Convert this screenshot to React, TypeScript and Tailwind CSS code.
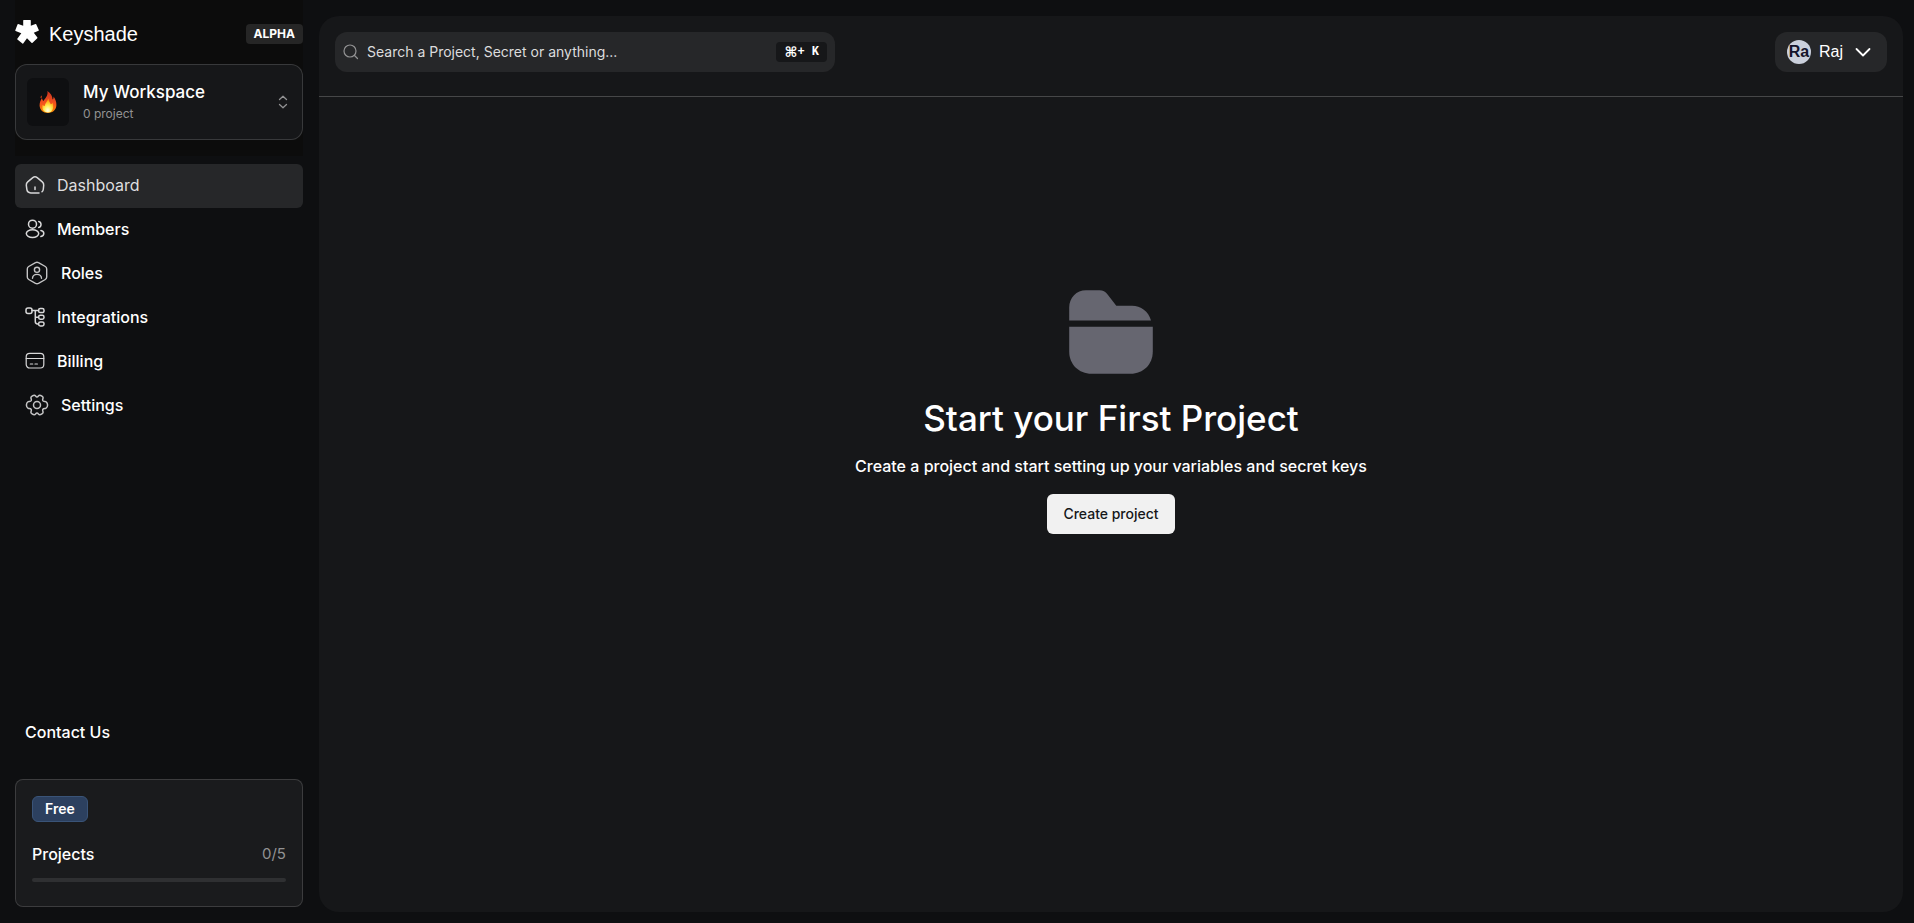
import type { ReactNode } from 'react';

type NavItem = { label: string; icon: ReactNode; active?: boolean; wide?: boolean };

const stroke = {
  fill: 'none',
  stroke: 'currentColor',
  strokeLinecap: 'round' as const,
  strokeLinejoin: 'round' as const,
};

function LogoIcon() {
  return (
    <svg viewBox="0 0 24 24" className="size-6" fill="white" aria-hidden="true">
      <path d="M8.200 .5Q8.200 0 8.700 0h6.600q.5 0 .5.500V5.800l4.700-1.800q.5-.2.700.3l2.600 5.700q.2.600-.3.800l-4.700 1.900 3.600 4.800q.3.400-.1.700l-5 4.700q-.4.400-.8-.1L12 18.300l-3.800 5.200q-.3.500-.8.100l-5-4.200q-.4-.3-.1-.7l4-5.400-5.700-2.200q-.5-.2-.3-.8l2.200-5.900q.2-.6.700-.4l5 1.800z" />
    </svg>
  );
}

function FlameIcon() {
  return (
    <svg viewBox="0 0 18 22" className="h-[22px] w-[18px]" aria-hidden="true">
      <defs>
        <linearGradient id="flame" x1="0" y1="0" x2="0" y2="1">
          <stop offset="0" stopColor="#c9341f" />
          <stop offset=".55" stopColor="#f4511e" />
          <stop offset="1" stopColor="#fb8c00" />
        </linearGradient>
        <radialGradient id="core" cx=".5" cy=".85" r=".75">
          <stop offset="0" stopColor="#fffde7" />
          <stop offset=".45" stopColor="#ffee58" />
          <stop offset="1" stopColor="#ff9800" />
        </radialGradient>
      </defs>
      <path fill="url(#flame)" d="M8.300 0c3.500 2 5.200 5 5.200 8.500.9-.6 1.200-1.700 1-3 2 2.700 3 5.600 2.900 8.600C17.300 18.800 13.900 22 9 22S.7 18.900.6 14.500c-.1-3 1.300-5.400 2.300-7.400.4 1 .7 2.400 1.600 3C5.900 7.500 9.600 4.500 8.300 0z" />
      <path fill="url(#core)" d="M9.300 7.500c.4 2.800 1.700 4 2.500 5.700.8-.2 1.400-.9 1.700-1.800 1.600 4.700.6 9.900-4.500 10.200-5 0-6.400-4-5.300-7.800.6.9 1.300 1.300 2 1.200.3-3 2.900-4.700 3.600-7.500z" />
      <path fill="#d84315" d="M1.500 6.500c.1-1 .7-1.600 1.300-2-.1.900.1 1.700-.2 2.300-.3.500-1.100.3-1.100-.3z" />
    </svg>
  );
}

function HomeIcon() {
  return (
    <svg viewBox="0 0 20 20" className="size-5" {...stroke} strokeWidth="1.500" aria-hidden="true">
      <path d="M17 16.800c.8-.7 1.200-1.500 1.300-2.600l.4-4c.1-1.400-.3-2.500-1.400-3.400l-5.100-4.100c-1.400-1.100-3-1.100-4.400 0L2.700 6.800C1.600 7.700 1.200 8.800 1.300 10.200l.5 4c.3 2.600 1.500 3.700 4 3.700h8.200M10 14.500v-2.500" />
    </svg>
  );
}

function MembersIcon() {
  return (
    <svg viewBox="0 0 20 20" className="size-5" {...stroke} strokeWidth="1.500" aria-hidden="true">
      <circle cx="7.500" cy="5.200" r="4" />
      <ellipse cx="7.500" cy="14.600" rx="6.200" ry="3.900" />
      <path d="M13.700 2.400a3.100 3.100 0 0 1 0 6M15.900 11.600c1.800.4 2.900 1.300 2.900 2.800 0 1.600-1.200 2.700-2.900 3.100" />
    </svg>
  );
}

function RolesIcon() {
  return (
    <svg viewBox="0 0 24 24" className="size-6" {...stroke} strokeWidth="1.400" aria-hidden="true">
      <path d="M10.500 1.700q1.500-.9 3 0l6.800 3.800q1.400.8 1.400 2.400v8.200q0 1.600-1.400 2.400l-6.800 3.900q-1.500.8-3 0l-6.800-3.900q-1.400-.8-1.400-2.400V7.900q0-1.600 1.400-2.400z" />
      <circle cx="12" cy="8.800" r="2.600" />
      <path d="M7.500 17.300c.2-2.500 2-3.900 4.500-3.900s4.300 1.400 4.500 3.900" />
    </svg>
  );
}

function IntegrationsIcon() {
  return (
    <svg viewBox="0 0 20 20" className="size-5" {...stroke} strokeWidth="1.500" aria-hidden="true">
      <rect x="1" y="1" width="6" height="5.400" rx="2" />
      <rect x="13.600" y="1.600" width="5.400" height="4" rx="1.700" />
      <rect x="13.600" y="8.200" width="5.400" height="4" rx="1.700" />
      <rect x="13.600" y="14.900" width="5.400" height="4" rx="1.700" />
      <path d="M7 3.600h6.500M10.300 3.600V14.500q0 2.400 2.300 2.400h1M10.300 10.200h3.300" />
    </svg>
  );
}

function BillingIcon() {
  return (
    <svg viewBox="0 0 20 20" className="size-5" {...stroke} strokeWidth="1.200" aria-hidden="true">
      <rect x="1.200" y="2.300" width="17.600" height="14.700" rx="3.500" />
      <path d="M1.200 7.500h17.600M5.300 13h2.400M10 13h2.400" />
    </svg>
  );
}

function SettingsIcon() {
  return (
    <svg viewBox="0 0 24 24" className="size-6" {...stroke} strokeWidth="1.500" aria-hidden="true">
      <circle cx="12" cy="12" r="3.500" />
      <path d="M9.400 2.300c1.100 0 1.300 1.700 2.600 1.700s1.500-1.700 2.600-1.700c1.500 0 3.500 1.200 3.500 2.500 0 1-.9 1.600-.3 2.800.7 1.200 2.200.5 3 1 1 .6 1.800 2.200 1.800 3.400s-.8 2.800-1.800 3.400c-.8.5-2.300-.2-3 1-.6 1.200.3 1.800.3 2.800 0 1.300-2 2.500-3.500 2.500-1.100 0-1.300-1.700-2.600-1.700s-1.500 1.700-2.600 1.700c-1.500 0-3.500-1.200-3.500-2.500 0-1 .9-1.600.3-2.800-.7-1.200-2.200-.5-3-1-1-.6-1.800-2.200-1.800-3.400s.8-2.800 1.800-3.400c.8-.5 2.300.2 3-1 .6-1.200-.3-1.800-.3-2.800 0-1.300 2-2.500 3.500-2.500z" />
    </svg>
  );
}

function FolderIcon() {
  return (
    <svg viewBox="0 0 84 84" className="size-[84px]" fill="#666670" aria-hidden="true">
      <path d="M.2 30.500V17.500C.2 7.500 7.500.2 17 .2h13.500c3.500 0 5.900 1.300 7.900 4l8.900 11.600H63c8.700 0 16.600 5.700 19 14.700z" />
      <path d="M.2 36.800H83.800V61.500c0 12.800-9.500 22.300-22.300 22.300H22.500C9.700 83.800.2 74.300.2 61.500z" />
    </svg>
  );
}

const navItems: NavItem[] = [
  { label: 'Dashboard', icon: <HomeIcon />, active: true },
  { label: 'Members', icon: <MembersIcon /> },
  { label: 'Roles', icon: <RolesIcon />, wide: true },
  { label: 'Integrations', icon: <IntegrationsIcon /> },
  { label: 'Billing', icon: <BillingIcon /> },
  { label: 'Settings', icon: <SettingsIcon />, wide: true },
];

function Sidebar() {
  return (
    <aside className="flex w-[319px] shrink-0 flex-col pr-4 pb-4 pl-[15px]">
      <div className="bg-[#0c0c0c] pt-5 pb-4">
        <div className="flex items-center justify-between">
          <div className="flex items-start gap-2.5 font-['Liberation_Sans',sans-serif] text-xl">
            <LogoIcon />
            Keyshade
          </div>
          <span className="rounded bg-[#262626] px-2 text-xs leading-5 font-bold">ALPHA</span>
        </div>
        <button type="button" className="mt-4 flex w-full items-center rounded-xl border border-white/15 bg-[#161719] px-[11px] py-[13px] text-left">
          <span className="flex h-12 w-[42px] items-center justify-center rounded-md bg-[#0e0f11]">
            <FlameIcon />
          </span>
          <span className="ml-3.5 flex grow flex-col">
            <span className="text-[17px] leading-6 font-medium">My Workspace</span>
            <span className="text-xs leading-5 text-[#929293]">0 project</span>
          </span>
          <svg viewBox="0 0 16 16" className="size-4 text-[#929293]" {...stroke} strokeWidth="1.300" aria-hidden="true">
            <path d="M4.500 5.500 8 2.300l3.500 3.200M4.500 10.500 8 13.700l3.500-3.200" />
          </svg>
        </button>
      </div>

      <nav className="mt-2 flex flex-col">
        {navItems.map((item) => (
          <a
            key={item.label}
            href="#"
            className={
              item.active
                ? 'flex h-11 items-center gap-3 rounded-md bg-[#262729] px-2.5 pb-0.5 text-[#dededf]'
                : 'flex h-11 items-center gap-3 rounded-md px-2.5 pb-0.5 font-medium'
            }
          >
            <span className={item.wide ? 'text-[#c4c4c5]' : 'text-[#d8d8d9]'}>{item.icon}</span>
            {item.label}
          </a>
        ))}
      </nav>

      <a href="#" className="mt-auto px-2.5 font-medium">
        Contact Us
      </a>

      <section className="mt-[35px] rounded-lg border border-white/15 bg-[#1a1b1d] p-4 pb-6">
        <span className="inline-block rounded-md border border-[#3a5478] bg-[#2c405f] px-3 text-sm leading-6 font-semibold">Free</span>
        <div className="mt-5 flex items-center justify-between">
          <span className="font-medium">Projects</span>
          <span className="text-[15px] text-[#929293]">0/5</span>
        </div>
        <div className="mt-3 h-1 rounded-full bg-[#2f3032]" />
      </section>
    </aside>
  );
}

export default function App() {
  return (
    <div className="flex min-h-screen bg-[#0e0f11] font-['Inter',sans-serif] text-white">
      <Sidebar />
      <main className="mt-4 mr-[11px] mb-[11px] flex grow flex-col rounded-[20px] bg-[#161719]">
        <header className="flex items-center justify-between border-b border-[#464748] px-4 pt-4 pb-6">
          <label className="flex h-10 w-[500px] items-center gap-2 rounded-xl bg-[#262729] px-2">
            <svg viewBox="0 0 16 16" className="size-4 shrink-0 text-[#929293]" {...stroke} strokeWidth="1.200" aria-hidden="true">
              <circle cx="7" cy="7" r="6" />
              <path d="m11.500 11.500 3 3" />
            </svg>
            <input
              aria-label="Search"
              placeholder="Search a Project, Secret or anything..."
              className="min-w-0 grow bg-transparent text-sm outline-none placeholder:text-[#dcdcdd]"
            />
            <kbd className="flex items-center rounded bg-[#161719] px-2 font-['Liberation_Mono','DejaVu_Sans',monospace] text-xs leading-5 font-bold whitespace-pre">
              <span className="font-['DejaVu_Sans',sans-serif] text-sm leading-5">⌘</span>+ K
            </kbd>
          </label>
          <button type="button" className="flex h-10 items-center gap-2 rounded-xl bg-[#262729] px-3 font-['Liberation_Sans',sans-serif]">
            <span className="flex size-6 items-center justify-center overflow-hidden rounded-full bg-[#cbd0dc] font-bold text-[#14142b]">Ra</span>
            Raj
            <svg viewBox="0 0 24 24" className="size-6" {...stroke} strokeWidth="1.800" aria-hidden="true">
              <path d="m5.500 9 6.500 6.500L18.500 9" />
            </svg>
          </button>
        </header>
        <section className="flex flex-col items-center pt-[193px]">
          <FolderIcon />
          <h1 className="mt-6 text-[35px] leading-10 font-medium">Start your First Project</h1>
          <p className="mt-4 font-medium">Create a project and start setting up your variables and secret keys</p>
          <button type="button" className="mt-4 h-10 rounded-md bg-[#f1f1f1] px-4 text-sm font-medium text-[#161719]">
            Create project
          </button>
        </section>
      </main>
    </div>
  );
}
